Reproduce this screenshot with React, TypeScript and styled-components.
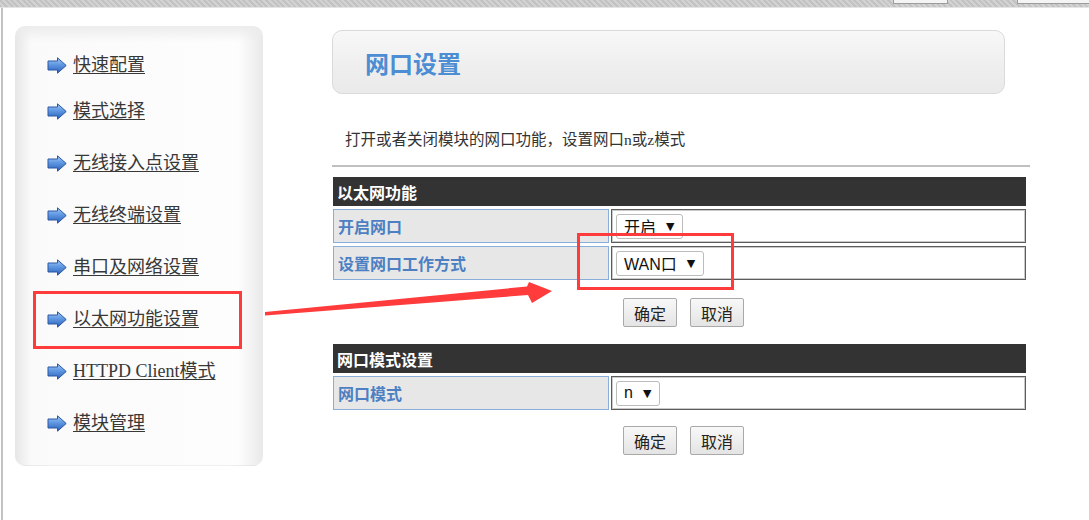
import React from 'react';
import styled, { createGlobalStyle } from 'styled-components';

const GlobalStyle = createGlobalStyle`
  *, *::before, *::after { box-sizing: border-box; }
  html, body { margin: 0; padding: 0; background: #fff; }
  body {
    width: 1089px;
    height: 520px;
    overflow: hidden;
    font-family: 'Liberation Serif', 'Noto Sans CJK SC', serif;
  }
`;

const menuItems = [
  '快速配置',
  '模式选择',
  '无线接入点设置',
  '无线终端设置',
  '串口及网络设置',
  '以太网功能设置',
  'HTTPD Client模式',
  '模块管理',
];

const ArrowIcon = () => (
  <svg width="20" height="17" viewBox="0 0 20 17">
    <defs>
      <linearGradient id="menuArrow" x1="0" y1="0" x2="0" y2="1">
        <stop offset="0" stopColor="#a6cbf6" />
        <stop offset="0.45" stopColor="#5f97e2" />
        <stop offset="1" stopColor="#2b5fb8" />
      </linearGradient>
    </defs>
    <path
      d="M1 4 H10.5 V0.8 L19.2 8.5 L10.5 16.2 V13 H1 Z"
      fill="url(#menuArrow)"
      stroke="#2a58a4"
      strokeWidth="1"
      strokeLinejoin="round"
    />
  </svg>
);

const App: React.FC = () => {
  return (
    <Page>
      <GlobalStyle />
      <TopStrip>
        <StripTab $w={55} />
        <StripTab $w={72} $open />
      </TopStrip>
      <Main>
        <SideMenu>
          <MenuList>
            {menuItems.map((label, i) => (
              <MenuItem key={label} $first={i === 0}>
                <ArrowIcon />
                <MenuLink href="#">{label}</MenuLink>
              </MenuItem>
            ))}
          </MenuList>
          <MenuFooter />
        </SideMenu>

        <Content>
          <TitleBox>
            <Title>网口设置</Title>
          </TitleBox>
          <Description>打开或者关闭模块的网口功能，设置网口n或z模式</Description>
          <Divider />

          <Section>
            <FormTable>
              <SectionHeader>以太网功能</SectionHeader>
              <LabelCell>开启网口</LabelCell>
              <ValueCell>
                <Select>
                  <span>开启</span>
                  <Caret>▼</Caret>
                </Select>
              </ValueCell>
              <LabelCell>设置网口工作方式</LabelCell>
              <ValueCell>
                <Select>
                  <span>WAN口</span>
                  <Caret>▼</Caret>
                </Select>
              </ValueCell>
            </FormTable>
            <ButtonRow>
              <Button>确定</Button>
              <Button>取消</Button>
            </ButtonRow>
          </Section>

          <Section $gap={17}>
            <FormTable>
              <SectionHeader>网口模式设置</SectionHeader>
              <LabelCell>网口模式</LabelCell>
              <ValueCell>
                <Select>
                  <span>n</span>
                  <Caret>▼</Caret>
                </Select>
              </ValueCell>
            </FormTable>
            <ButtonRow $gap={16}>
              <Button>确定</Button>
              <Button>取消</Button>
            </ButtonRow>
          </Section>
        </Content>
      </Main>

      <RedBox $x={33} $y={291} $w={209} $h={58} />
      <RedBox $x={577} $y={233} $w={157} $h={57} />
      <Annotation width="1089" height="520" viewBox="0 0 1089 520">
        <polygon
          points="265,312 527,286.5 529,282 552,291 532,303 528,295 265,315.5"
          fill="#ff3b3b"
        />
      </Annotation>
    </Page>
  );
};

export default App;

const Page = styled.div`
  position: relative;
  width: 1089px;
  height: 520px;
  overflow: hidden;
  background: #fff;
`;

const TopStrip = styled.div`
  height: 8px;
  display: flex;
  justify-content: flex-end;
  gap: 69px;
  background-color: #cbcbcb;
  background-image: repeating-linear-gradient(45deg, #c2c2c2 0 2px, #d2d2d2 2px 4px);
  border-bottom: 1px solid #e4e4e4;
`;

const StripTab = styled.div<{ $w: number; $open?: boolean }>`
  width: ${(p) => p.$w}px;
  height: 4px;
  background: #f4f4f4;
  border: 1px solid #9c9c9c;
  border-top: none;
  border-right: ${(p) => (p.$open ? 'none' : '1px solid #9c9c9c')};
`;

const Main = styled.div`
  display: flex;
  align-items: flex-start;
  height: 512px;
  margin-left: 1px;
  border-left: 2px solid #c2c2c2;
  padding: 18px 0 0 12px;
`;

const SideMenu = styled.nav`
  width: 248px;
  height: 440px;
  display: flex;
  flex-direction: column;
  border-radius: 10px;
  overflow: hidden;
  background:
    linear-gradient(180deg, #ececec 0, rgba(255, 255, 255, 0) 16px),
    linear-gradient(90deg, #e6e6e6 0, #fafafa 16px, #fdfdfd 90%, #e9e9e9 100%);
`;

const MenuList = styled.ul`
  flex: 1;
  list-style: none;
  margin: 0;
  padding: 29px 0 0 32px;
`;

const MenuItem = styled.li<{ $first?: boolean }>`
  display: flex;
  align-items: center;
  gap: 6px;
  height: 20px;
  margin-bottom: ${(p) => (p.$first ? 26 : 32)}px;
`;

const MenuLink = styled.a`
  font-family: 'Liberation Serif', 'Noto Sans CJK SC', serif;
  font-size: 18px;
  line-height: 20px;
  color: #383838;
  text-decoration: underline;
  text-underline-offset: 2px;
`;

const MenuFooter = styled.div`
  height: 26px;
  border-radius: 0 0 10px 10px;
  background:
    linear-gradient(180deg, rgba(255, 255, 255, 0.4) 0, rgba(0, 0, 0, 0.05) 100%),
    linear-gradient(90deg, #e2e2e2 0, #f3f3f3 14%, #f3f3f3 88%, #e0e0e0 100%);
`;

const Content = styled.main`
  margin-left: 69px;
  width: 700px;
  padding-top: 4px;
`;

const TitleBox = styled.div`
  width: 673px;
  height: 64px;
  display: flex;
  align-items: center;
  padding-left: 32px;
  border: 1px solid #dadada;
  border-radius: 10px;
  background: linear-gradient(180deg, #f8f8f8 0%, #eeeeee 60%, #eaeaea 100%);
`;

const Title = styled.h2`
  margin: 0;
  font-family: 'Liberation Sans', 'Noto Sans CJK SC', sans-serif;
  font-size: 24px;
  font-weight: bold;
  color: #4d8dd3;
`;

const Description = styled.p`
  margin: 36px 0 0;
  padding-left: 13px;
  font-family: 'Liberation Serif', 'Noto Sans CJK SC', serif;
  font-size: 15.5px;
  line-height: 20px;
  color: #333;
`;

const Divider = styled.hr`
  margin: 15px 0 0;
  width: 698px;
  border: none;
  border-top: 2px solid #c0c0c0;
`;

const Section = styled.section<{ $gap?: number }>`
  margin-top: ${(p) => p.$gap ?? 10}px;
`;

const FormTable = styled.div`
  display: grid;
  grid-template-columns: 276px 415px;
  column-gap: 2px;
  row-gap: 3px;
  margin-left: 1px;
  font-family: 'Liberation Sans', 'Noto Sans CJK SC', sans-serif;
`;

const SectionHeader = styled.div`
  grid-column: 1 / -1;
  height: 29px;
  display: flex;
  align-items: center;
  padding-left: 4px;
  background: #333;
  color: #fff;
  font-size: 16px;
  font-weight: bold;
`;

const LabelCell = styled.div`
  height: 34px;
  display: flex;
  align-items: center;
  padding-left: 4px;
  background: #e7e7e7;
  border: 1px solid #88aedb;
  color: #4c80c2;
  font-size: 16px;
  font-weight: bold;
`;

const ValueCell = styled.div`
  height: 34px;
  display: flex;
  align-items: center;
  padding-left: 4px;
  background: #fff;
  border: 1px solid #5c5c5c;
  box-shadow: inset 0 0 0 1px #c9c9c9;
`;

const Select = styled.div`
  height: 25px;
  display: inline-flex;
  align-items: center;
  gap: 10px;
  padding: 0 8px 0 7px;
  background: #fff;
  border: 1px solid #bcbcbc;
  border-radius: 3px;
  font-family: 'Liberation Sans', 'Noto Sans CJK SC', sans-serif;
  font-size: 16px;
  color: #111;
`;

const Caret = styled.span`
  font-family: 'DejaVu Sans', sans-serif;
  font-size: 11px;
  color: #111;
`;

const ButtonRow = styled.div<{ $gap?: number }>`
  display: flex;
  justify-content: center;
  gap: 13px;
  margin-top: ${(p) => p.$gap ?? 18}px;
  padding-left: 3px;
`;

const Button = styled.button`
  width: 54px;
  height: 29px;
  padding: 0;
  border: 1px solid #a9a9a9;
  border-radius: 2px;
  background: linear-gradient(180deg, #f8f8f8 0%, #e4e4e4 100%);
  font-family: 'Noto Sans CJK SC', sans-serif;
  font-size: 16px;
  color: #222;
  cursor: pointer;
`;

const RedBox = styled.div<{ $x: number; $y: number; $w: number; $h: number }>`
  position: absolute;
  left: ${(p) => p.$x}px;
  top: ${(p) => p.$y}px;
  width: ${(p) => p.$w}px;
  height: ${(p) => p.$h}px;
  border: 3px solid #ff3b3b;
  pointer-events: none;
`;

const Annotation = styled.svg`
  position: absolute;
  left: 0;
  top: 0;
  pointer-events: none;
`;
